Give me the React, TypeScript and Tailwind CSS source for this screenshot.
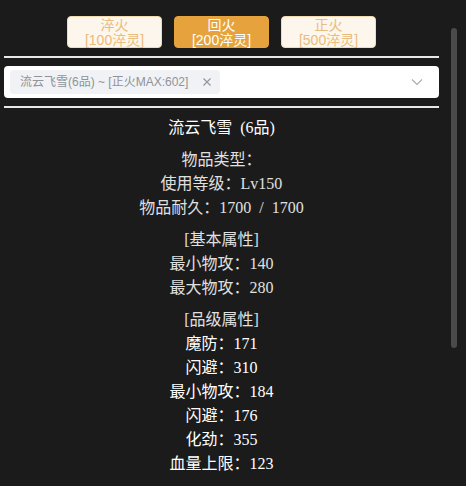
import { useState } from 'react';

const modes = [
  { name: '淬火', cost: '[100淬灵]' },
  { name: '回火', cost: '[200淬灵]' },
  { name: '正火', cost: '[500淬灵]' },
];

const baseAttrs = ['最小物攻：140', '最大物攻：280'];
const gradeAttrs = ['魔防：171', '闪避：310', '最小物攻：184', '闪避：176', '化劲：355', '血量上限：123'];

export default function App() {
  const [active, setActive] = useState(1);

  return (
    <div className="relative h-[486px] w-[466px] overflow-hidden bg-[#1b1b1b]">
      <div className="ml-1 flex w-[435px] flex-col">
        <div className="flex justify-center gap-3 pt-4 pb-2 font-['Liberation_Sans','Noto_Sans_CJK_SC',sans-serif]">
          {modes.map((m, i) => (
            <button
              key={m.name}
              onClick={() => setActive(i)}
              className={`flex h-8 w-[95px] flex-col items-center justify-center rounded border pt-px text-[14px] leading-[15px] ${
                i === active
                  ? 'border-[#e6a23c] bg-[#e6a23c] text-white'
                  : 'border-[#f5dab1] bg-[#fdf6ec] text-[#eabb7e]'
              }`}
            >
              <span>{m.name}</span>
              <span>{m.cost}</span>
            </button>
          ))}
        </div>

        <div className="h-[2px] bg-[#e8e8e8]" />

        <div className="my-2 flex h-8 items-center rounded bg-white pr-4 pl-[6px] font-['Liberation_Sans','Noto_Sans_CJK_SC',sans-serif]">
          <span className="flex h-6 items-center gap-[6px] rounded bg-[#f0f2f5] pr-2 pl-[10px] text-[12px] text-[#909399]">
            流云飞雪(6品) ~ [正火MAX:602]
            <svg width="10" height="10" viewBox="0 0 10 10" className="ml-2">
              <path d="M1.5 1.5 L8.5 8.5 M8.5 1.5 L1.5 8.5" stroke="#909399" strokeWidth="1.1" />
            </svg>
          </span>
          <svg width="12" height="8" viewBox="0 0 12 8" className="ml-auto">
            <path d="M1 1.5 L6 6.5 L11 1.5" fill="none" stroke="#a8abb2" strokeWidth="1.1" />
          </svg>
        </div>

        <div className="h-[2px] bg-[#e8e8e8]" />

        <div className="flex flex-col items-center pt-2 font-['Liberation_Serif','Noto_Sans_CJK_SC',serif] text-[16px] leading-6 text-[#e0e0e0] [word-spacing:4px]">
          <p className="text-white">流云飞雪 (6品)</p>
          <div className="mt-2 flex flex-col items-center">
            <p>物品类型：</p>
            <p>使用等级：Lv150</p>
            <p>物品耐久：1700 / 1700</p>
          </div>
          <div className="mt-2 flex flex-col items-center">
            <p>[基本属性]</p>
            {baseAttrs.map((a) => (
              <p key={a}>{a}</p>
            ))}
          </div>
          <div className="mt-2 flex flex-col items-center">
            <p>[品级属性]</p>
            {gradeAttrs.map((a, i) => (
              <p key={i} className="text-white">
                {a}
              </p>
            ))}
          </div>
        </div>
      </div>

      <div className="absolute top-[28px] left-[451px] h-[320px] w-[6px] rounded-full bg-[#4a4a4a]" />
    </div>
  );
}
